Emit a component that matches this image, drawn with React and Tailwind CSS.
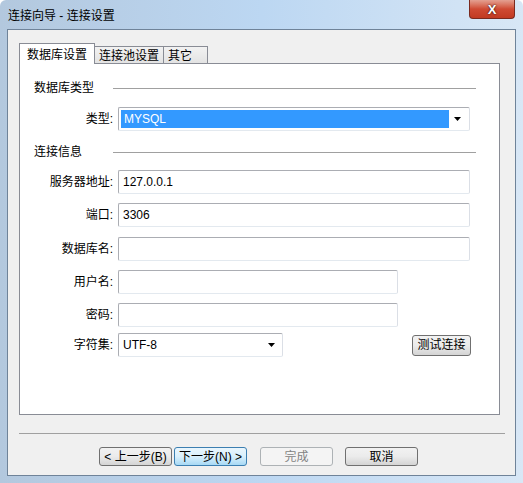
import React from "react";

const font = { fontFamily: '"Liberation Sans", "Noto Sans CJK SC", sans-serif' };

const Field = ({ label, value, width = "w-[352px]", mt }) => (
  <div className={`flex items-center ${mt}`}>
    <div className="w-[94px] text-right pr-[1px]">{label}</div>
    <div
      className={`${width} h-[24px] ml-[4px] bg-white border border-[#abadb3] border-b-[#e3e9ef] border-r-[#dbdfe6] rounded-[2px] flex items-center pl-[4px]`}
    >
      {value}
    </div>
  </div>
);

const Caret = () => (
  <svg width="7" height="4" viewBox="0 0 7 4">
    <path d="M0 0h7L3.5 4z" fill="#000" />
  </svg>
);

const SectionHead = ({ title, mt }) => (
  <div className={`flex items-center h-[16px] ${mt}`}>
    <span className="w-[93px] pl-[14px]">{title}</span>
    <div className="flex-1 h-px bg-[#a0a0a0] mr-[23px]" />
  </div>
);

const WizardButton = ({ children, variant = "normal" }) => {
  const styles = {
    normal:
      "border-[#707070] bg-gradient-to-b from-[#f2f2f2] via-[#ebebeb] to-[#d4d4d4] text-black",
    focus:
      "border-[#3c7fb1] bg-gradient-to-b from-[#eaf6fd] via-[#d9f0fc] to-[#a7d9f5] text-black",
    disabled: "border-[#adb2b5] bg-[#f4f4f4] text-[#838383]",
  };
  return (
    <button
      className={`w-[73px] h-[19px] border rounded-[3px] flex items-center justify-center leading-none ${styles[variant]}`}
    >
      {children}
    </button>
  );
};

export default function App() {
  const tabs = ["数据库设置", "连接池设置", "其它"];

  return (
    <div
      className="w-[523px] h-[483px] flex flex-col px-[7px] pb-[7px] text-[12px] text-black bg-gradient-to-r from-[#b3c8de] via-[#bcd7f2] to-[#d8e7f6] rounded-t-[6px]"
      style={font}
    >
      {/* title bar */}
      <div className="h-[29px] flex items-start justify-between">
        <span className="mt-[7px] ml-[1px]">连接向导 - 连接设置</span>
        <div className="w-[46px] h-[19px] mr-[1px] rounded-b-[4px] border border-t-0 border-[#7a2a1f] bg-gradient-to-b from-[#e3a091] via-[#cf4a33] to-[#c13a22] flex items-center justify-center">
          <span className="text-white font-bold text-[13px] leading-none" style={{ textShadow: "0 0 2px #000" }}>
            X
          </span>
        </div>
      </div>

      {/* client area */}
      <div className="flex-1 border border-[#6f8399] bg-[#f0f0f0] pt-[13px] pl-[11px] flex flex-col">
        {/* tabs */}
        <div className="flex items-end h-[20px]">
          {tabs.map((tab, i) =>
            i === 0 ? (
              <div
                key={tab}
                className="w-[76px] h-[21px] -mb-px relative z-10 bg-white border border-b-0 border-[#898c95] flex items-start justify-center pt-[2px]"
              >
                {tab}
              </div>
            ) : (
              <div
                key={tab}
                className={`${i === 1 ? "w-[70px]" : "w-[45px]"} h-[17px] -ml-px border border-b-0 border-[#898c95] bg-gradient-to-b from-[#f2f2f2] to-[#e3e3e3] flex items-start pl-[4px]`}
              >
                {tab}
              </div>
            )
          )}
        </div>

        {/* tab panel */}
        <div className="w-[481px] h-[352px] bg-white border border-[#898c95]">
          <SectionHead title="数据库类型" mt="mt-[16px]" />

          <div className="flex items-center mt-[11px]">
            <div className="w-[94px] text-right pr-[1px]">类型:</div>
            <div className="w-[352px] h-[24px] ml-[4px] bg-white border border-[#abadb3] border-b-[#e3e9ef] border-r-[#dbdfe6] rounded-[2px] flex items-center pl-[2px] pr-[8px]">
              <div className="w-[328px] h-[18px] bg-[#3399ff] text-white flex items-center pl-[3px]">MYSQL</div>
              <div className="flex-1 flex justify-end">
                <Caret />
              </div>
            </div>
          </div>

          <SectionHead title="连接信息" mt="mt-[13px]" />

          <Field label="服务器地址:" value="127.0.0.1" mt="mt-[10px]" />
          <Field label="端口:" value="3306" mt="mt-[9px]" />
          <Field label="数据库名:" value="" mt="mt-[10px]" />
          <Field label="用户名:" value="" width="w-[280px]" mt="mt-[9px]" />
          <Field label="密码:" value="" width="w-[280px]" mt="mt-[9px]" />

          <div className="flex items-center mt-[6px]">
            <div className="w-[94px] text-right pr-[1px]">字符集:</div>
            <div className="w-[165px] h-[24px] ml-[4px] bg-white border border-[#abadb3] border-b-[#e3e9ef] border-r-[#dbdfe6] rounded-[2px] flex items-center justify-between pl-[4px] pr-[7px]">
              <span>UTF-8</span>
              <Caret />
            </div>
            <button className="ml-[129px] w-[59px] h-[21px] border border-[#707070] rounded-[3px] bg-gradient-to-b from-[#f2f2f2] via-[#ebebeb] to-[#d4d4d4] flex items-center justify-center leading-none">
              测试连接
            </button>
          </div>
        </div>

        {/* separator */}
        <div className="w-[486px] h-px bg-[#a0a0a0] mt-[18px]" />

        {/* buttons */}
        <div className="flex mt-[13px] pl-[80px]">
          <WizardButton>&lt; 上一步(B)</WizardButton>
          <div className="ml-[2px]">
            <WizardButton variant="focus">下一步(N) &gt;</WizardButton>
          </div>
          <div className="ml-[13px]">
            <WizardButton variant="disabled">完成</WizardButton>
          </div>
          <div className="ml-[12px]">
            <WizardButton>取消</WizardButton>
          </div>
        </div>
      </div>
    </div>
  );
}
